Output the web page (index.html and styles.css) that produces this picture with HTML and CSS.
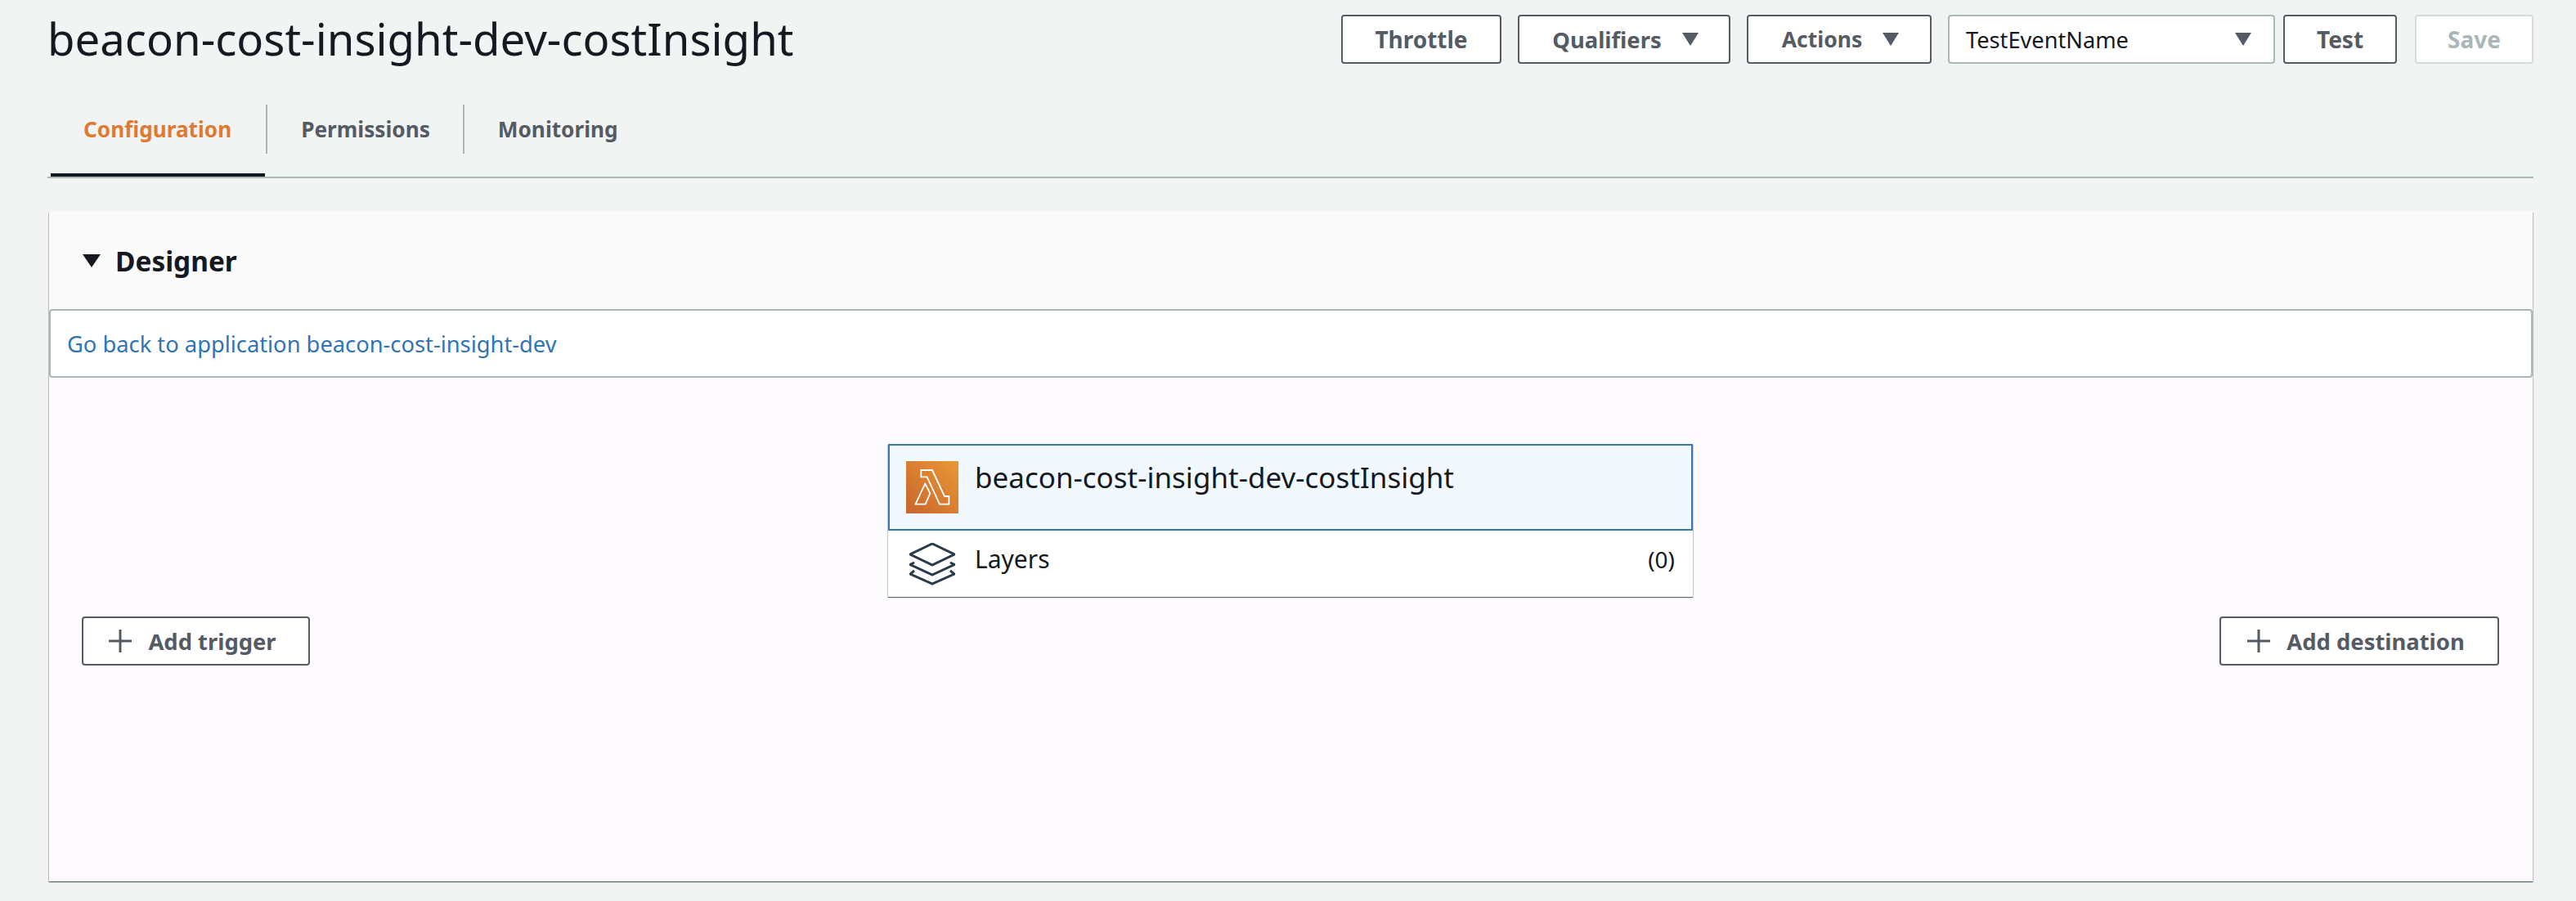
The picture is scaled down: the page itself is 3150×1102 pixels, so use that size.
FILE: index.html
```html
<!DOCTYPE html>
<html lang="en">

<head>
    <meta charset="UTF-8">
    <title>beacon-cost-insight-dev-costInsight</title>
    <link rel="stylesheet" href="styles.css">
</head>

<body>
    <header class="page-head">
        <h1 class="page-title">beacon-cost-insight-dev-costInsight</h1>
        <div class="actions">
            <button class="btn btn-throttle" type="button">Throttle</button>
            <button class="btn btn-qualifiers" type="button">Qualifiers
                <svg class="caret" viewBox="0 0 22 16"><path d="M1 0h20l-10 16z" /></svg>
            </button>
            <button class="btn btn-actions" type="button">Actions
                <svg class="caret" viewBox="0 0 22 16"><path d="M1 0h20l-10 16z" /></svg>
            </button>
            <div class="event-select">
                <span>TestEventName</span>
                <svg class="caret" viewBox="0 0 22 16"><path d="M1 0h20l-10 16z" /></svg>
            </div>
            <button class="btn btn-test" type="button">Test</button>
            <button class="btn btn-save" type="button">Save</button>
        </div>
    </header>

    <nav class="tabs">
        <a class="tab tab-active">Configuration</a>
        <a class="tab">Permissions</a>
        <a class="tab">Monitoring</a>
    </nav>

    <section class="panel">
        <div class="panel-head">
            <svg class="panel-toggle" viewBox="0 0 22 16"><path d="M0 0h22l-11 16z" /></svg>
            <h2 class="panel-title">Designer</h2>
        </div>
        <div class="app-link"><a>Go back to application beacon-cost-insight-dev</a></div>
        <div class="designer">
            <button class="btn btn-add btn-trigger" type="button">
                <svg class="plus" viewBox="0 0 28 28"><path d="M14 0v28M0 14h28" /></svg>
                Add trigger
            </button>
            <div class="fn-card">
                <div class="fn-main">
                    <svg class="fn-icon" viewBox="0 0 64 64">
                        <defs>
                            <linearGradient id="lambdaBg" x1="0" y1="1" x2="1" y2="0">
                                <stop offset="0" stop-color="#c8652c" />
                                <stop offset="1" stop-color="#ea9836" />
                            </linearGradient>
                        </defs>
                        <rect width="64" height="64" fill="url(#lambdaBg)" />
                        <path class="lambda" d="M18.3 11H32L47 43h5.4v9.700H41L25.600 19.300h-7.300z" />
                        <path class="lambda" d="M11.500 52.700h12.100l5.800-13.400-6.200-11.600z" />
                    </svg>
                    <span class="fn-name">beacon-cost-insight-dev-costInsight</span>
                </div>
                <div class="fn-layers">
                    <svg class="layers-icon" viewBox="0 0 56 52">
                        <path d="M28 1l27 13-27 13L1 14z" />
                        <path d="M6 24l-5 2.500 27 12.500 27-12.500-5-2.500" />
                        <path d="M6 34l-5 4 27 12 27-12-5-4" />
                    </svg>
                    <span class="layers-name">Layers</span>
                    <span class="layers-count">(0)</span>
                </div>
            </div>
            <button class="btn btn-add btn-destination" type="button">
                <svg class="plus" viewBox="0 0 28 28"><path d="M14 0v28M0 14h28" /></svg>
                Add destination
            </button>
        </div>
    </section>
</body>

</html>
```

FILE: styles.css
```css
body {
    margin: 0;
    padding: 0 52px 0 58px;
    height: 1102px;
    box-sizing: border-box;
    overflow: hidden;
    background-color: #f2f3f3;
    color: #16191f;
    font-family: "Noto Sans", "Open Sans", sans-serif;
}

.page-head {
    display: flex;
    justify-content: space-between;
    align-items: flex-start;
    padding-top: 16px;
}

.page-title {
    margin: 0;
    font-size: 54.5px;
    line-height: 62px;
    font-weight: 400;
}

.actions {
    display: flex;
    align-items: center;
    padding-top: 2px;
}

.btn {
    display: flex;
    align-items: center;
    justify-content: center;
    box-sizing: border-box;
    height: 60px;
    padding: 0;
    background-color: #fff;
    border: 2px solid #545b64;
    border-radius: 4px;
    color: #545b64;
    font-family: inherit;
    font-size: 27.4px;
    font-weight: 700;
}

.caret {
    width: 22px;
    height: 16px;
    fill: #545b64;
}

.btn-throttle {
    width: 196px;
    margin-right: 20px;
    font-size: 28px;
}

.btn-qualifiers {
    width: 260px;
    margin-right: 20px;
    padding-left: 4px;
    gap: 24px;
}

.btn-actions {
    width: 226px;
    margin-right: 20px;
    padding-left: 4px;
    gap: 24px;
    font-size: 26.5px;
}

.event-select {
    display: flex;
    align-items: center;
    justify-content: space-between;
    box-sizing: border-box;
    width: 400px;
    height: 60px;
    margin-right: 10px;
    padding: 0 26px 0 20px;
    background-color: #fff;
    border: 2px solid #aab7b8;
    border-radius: 4px;
    font-size: 27.2px;
}

.btn-test {
    width: 139px;
    margin-right: 22px;
    font-size: 28px;
}

.btn-save {
    width: 145px;
    border-color: #d5dbdb;
    color: #aab7b8;
    font-size: 28px;
}

.tabs {
    display: flex;
    height: 100px;
    margin-top: 38px;
    box-sizing: content-box;
    border-bottom: 2px solid #aab7b8;
}

.tab {
    position: relative;
    display: flex;
    align-items: flex-start;
    box-sizing: border-box;
    height: 60px;
    margin-top: 12px;
    padding: 10px 40px 0 41px;
    border-right: 2px solid #aab7b8;
    color: #545b64;
    font-size: 26.2px;
    line-height: 40px;
    font-weight: 700;
}

.tab:last-child {
    border-right: none;
}

.tab-active {
    color: #df7a32;
    margin-left: 4px;
    padding-left: 40px;
    padding-right: 42px;
}

/* underline of the open tab, sits on the tab bar's border */
.tab-active::after {
    content: "";
    position: absolute;
    left: 0;
    right: 1px;
    top: 84px;
    height: 4px;
    background-color: #16191f;
}

.panel {
    height: 819px;
    margin-top: 41px;
    margin-left: 2px;
    margin-right: 1px;
    background-color: #fdfbfe;
    box-shadow: 0 1px 1px 0 rgba(0, 28, 36, 0.5), 1px 1px 1px 0 rgba(0, 28, 36, 0.15), -1px 1px 1px 0 rgba(0, 28, 36, 0.15);
}

.panel-head {
    display: flex;
    align-items: center;
    box-sizing: border-box;
    height: 119px;
    padding-left: 41px;
    background-color: #fafafa;
}

.panel-toggle {
    width: 22px;
    height: 16px;
    margin-right: 18px;
    fill: #16191f;
}

.panel-title {
    margin: 0;
    font-size: 33.4px;
    line-height: 40px;
    font-weight: 700;
}

.app-link {
    box-sizing: border-box;
    height: 84px;
    padding: 0 20px;
    display: flex;
    align-items: center;
    background-color: #fff;
    border: 2px solid #aab7b8;
    border-radius: 4px;
    font-size: 27.3px;
}

.app-link a {
    color: #2f74b5;
}

.designer {
    display: grid;
    grid-template-columns: 1fr auto 1fr;
    align-items: start;
    padding: 81px 41px 0 40px;
}

.btn-add {
    margin-top: 211px;
    padding-right: 8px;
    gap: 20px;
}

.btn-trigger {
    width: 279px;
    justify-self: start;
}

.btn-destination {
    width: 342px;
    justify-self: end;
}

.plus {
    width: 28px;
    height: 28px;
    fill: none;
    stroke: #545b64;
    stroke-width: 3;
}

.fn-card {
    width: 984px;
    background-color: #fff;
    box-shadow: 0 1px 1px 0 rgba(0, 28, 36, 0.5), 1px 1px 1px 0 rgba(0, 28, 36, 0.15), -1px 1px 1px 0 rgba(0, 28, 36, 0.15);
}

.fn-main {
    display: flex;
    align-items: flex-start;
    box-sizing: border-box;
    height: 106px;
    padding: 19px 20px 0;
    background-color: #f1f9ff;
    border: 2px solid #337ab7;
}

.fn-icon {
    width: 64px;
    height: 64px;
    margin-right: 20px;
}

.lambda {
    fill: none;
    stroke: #fff;
    stroke-width: 1.8;
}

.fn-name {
    font-size: 35px;
    line-height: 40px;
}

.fn-layers {
    display: flex;
    align-items: flex-start;
    box-sizing: border-box;
    height: 81px;
    padding: 15px 22px 0 26px;
    font-size: 30px;
    line-height: 40px;
}

.layers-icon {
    flex: none;
    width: 56px;
    height: 52px;
    margin-right: 24px;
    fill: none;
    stroke: #2b3a4a;
    stroke-width: 3;
}

.layers-name {
    flex: 1;
}

.layers-count {
    font-size: 28px;
}
```
